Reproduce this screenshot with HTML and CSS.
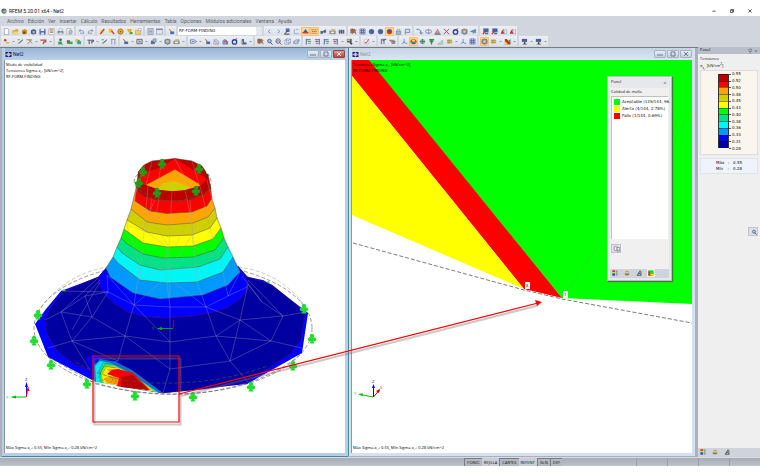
FILE: index.html
```html
<!DOCTYPE html>
<html lang="es">
<head>
    <meta charset="UTF-8">
    <meta name="viewport" content="width=device-width, initial-scale=1.0">
    <title>RFEM 5.20.01 x64 - Net2</title>
    <link rel="stylesheet" href="styles.css">
</head>
<body>
    <header class="titlebar">
        <svg class="app-icon" viewBox="0 0 16 16"><circle cx="8" cy="8" r="7" fill="#4d78a8"/><path d="M3 3l10 3-4 8z" fill="#23476f"/><path d="M6 6h7v6H6z" fill="#d9b64a"/></svg>
        <span class="app-name">RFEM 5.20.01 x64 - Net2</span>
        <button class="sys" aria-label="Minimizar"><svg viewBox="0 0 10 10"><path d="M1 5.5h8"/></svg></button>
        <button class="sys" aria-label="Restaurar"><svg viewBox="0 0 10 10"><path d="M1 3h6v6H1zM3 3V1h6v6H7"/></svg></button>
        <button class="sys" aria-label="Cerrar"><svg viewBox="0 0 10 10"><path d="M1 1l8 8M9 1L1 9"/></svg></button>
    </header>
    <nav class="menubar">
        <a href="#">Archivo</a>
        <a href="#">Edición</a>
        <a href="#">Ver</a>
        <a href="#">Insertar</a>
        <a href="#">Cálculo</a>
        <a href="#">Resultados</a>
        <a href="#">Herramientas</a>
        <a href="#">Tabla</a>
        <a href="#">Opciones</a>
        <a href="#">Módulos adicionales</a>
        <a href="#">Ventana</a>
        <a href="#">Ayuda</a>
    </nav>
    <div class="toolbar">
        <div class="group" data-icons="new open box boxblue save table print preview"></div>
        <div class="group" data-icons="undo redo"></div>
        <div class="group" data-icons="pen find gear cup folder"></div>
        <div class="group" data-icons="sheet window"></div>
        <div class="group" data-icons="load"></div>
        <select class="case" aria-label="Caso de carga"><option>RF-FORM-FINDING</option></select>
        <div class="group" data-icons="prev next node line *result *values glasses cam beam"></div>
        <div class="group" data-icons="mesh grid sphere sphere *redball lock flag"></div>
        <div class="group" data-icons="curve rotate support cross bluering module share"></div>
        <div class="group" data-icons="screen screen arrowred arrowred"></div>
    </div>
    <div class="toolbar">
        <div class="group" data-icons="member - pencil truss - hook -"></div>
        <div class="group" data-icons="man greens cube"></div>
        <div class="group" data-icons="bridge - pencil column"></div>
        <div class="group" data-icons="load - frame - solid - module cam -"></div>
        <div class="group" data-icons="tag - load house houser bluering boot -"></div>
        <div class="group" data-icons="mesh zoom zoomr wire view"></div>
        <div class="group" data-icons="axis axisr axis axisr - fly -"></div>
        <div class="group" data-icons="check -"></div>
        <div class="group" data-icons="portal slab"></div>
        <div class="group" data-icons="axis2 *rainbow greenball tree ramp yellows - axis2 grid"></div>
        <div class="group" data-icons="*module yellows - iso -"></div>
        <div class="group" data-icons="plug - plug -"></div>
    </div>

    <main class="workspace">
        <div class="mdi">
            <section class="window active">
                <div class="window-title">
                    <svg class="doc-icon" viewBox="0 0 12 10"><path d="M0 0h12v10H0z" fill="#1b2070"/><path d="M6 0v10M0 5h12M3 3h6v4H3z" stroke="#fff" fill="none"/></svg>
                    <h2>Net2</h2>
                    <button class="win" aria-label="Minimizar"><svg viewBox="0 0 10 6"><path d="M2 4h6"/></svg></button>
                    <button class="win" aria-label="Maximizar"><svg viewBox="0 0 10 6"><path d="M3 1h4v4H3z"/></svg></button>
                    <button class="win close" aria-label="Cerrar"><svg viewBox="0 0 10 6"><path d="M3 1l4 4M7 1L3 5"/></svg></button>
                </div>
                <div class="view">
                    <svg class="scene" viewBox="5 60 340 393" preserveAspectRatio="xMinYMin meet">
                        <defs>
                            <path id="club" d="M-1 -1.2A2.1 2.1 0 1 1 1 -1.2A2 2 0 1 1 1.2 2L2.6 4.5H-2.6L-1.2 2A2 2 0 1 1-1-1.2z"/>
                        </defs>
                        <!-- undeformed outline -->
                        <g class="outline">
                            <path class="faint" d="M41 308C55 288 78 272 107 267M238 267Q280 272 305 306"/>
                            <ellipse cx="173" cy="328" rx="139" ry="66"/>
                        </g>
                        <!-- base membrane -->
                        <path fill="#0000ff" d="M106 268L98 277 61 291 46 309 35 324 48 357 92 380 163 393 247 384 302 353 308 313 272 285 263 280 248 277 238 266z"/>
                        <path class="edge" fill="#0000a0" d="M98 277L63 292 50 308 45 320 47 334 57 351 74 364 92 371 118 386 163 393 205 389 247 382 270 367 290 354 301 340 305 312 272 285 248 277z"/>
                        <path fill="#0000ff" d="M86 358l7-3 30 8-28 19z"/>
                        <path class="edge" fill="#0000ff" d="M106 268L98 278 100 287 106 296 115 304 128 312 147 317 167 318 193 316 210 313 227 308 240 299 248 289 248 281 238 266z"/>
                        <!-- stress bands of the cone, bottom to top -->
                        <g class="bands">
                            <path fill="#0099ff" d="M113 257L106 268 110 277 133 293 160 299 203 295 228 285 240 272 233 257z"/>
                            <path fill="#00f5f5" d="M117 247L113 257 118 263 140 280 167 283 197 282 223 272 233 257 228 247z"/>
                            <path fill="#00e285" d="M121 238L117 247 122 253 140 265 160 270 198 267 220 259 228 247 224 238z"/>
                            <path fill="#00ff00" d="M124 229L121 238 126 243 143 254 163 258 193 257 215 250 224 238 221 228z"/>
                            <path fill="#ffff00" d="M127 220L124 229 143 243 167 247 193 246 213 239 221 228 217 218z"/>
                            <path fill="#d0d000" d="M131 209L127 220 147 232 167 236 192 235 210 228 217 218 215 208z"/>
                            <path fill="#ffa500" d="M137 184L131 209 147 222 167 225 193 223 208 217 215 208 212 199z"/>
                            <path fill="#ff0000" d="M138 175L135 201 150 211 167 213.500 192 212 207 206 212 198 210 184z"/>
                            <path fill="#bb0000" d="M138 174L138 192 145 197 155 200 175 201 190 200 203 195 211 189 208 174z"/>
                        </g>
                        <!-- inside of the ring -->
                        <path fill="#bb0000" stroke="#333" stroke-width=".5" d="M139 181L138 172 144 165 152 161 162 160 175 158.500 192 161 202 166 206 172 207 180 200 186 185 190 172 191 160 190 148 187z"/>
                        <path fill="#ff0000" d="M139 181L140 174 160 168 175 158.500 206 178 207 180 200 186 148 187z"/>
                        <path fill="#ffa500" d="M146 185L175 169.500 199 184 200 186 185 190 172 191 160 190z"/>
                        <path fill="#d0d000" d="M157 189L164 183 175 181.500 190 187 185 190 172 191z"/>
                        <path class="outline" d="M138 174C130 182 134 190 155 199Q178 204 203 195Q216 185 208 174"/>
                        <!-- mesh -->
                        <path class="mesh" d="M108 292L85 296 61 312 45 320M108 292L62 291M85 296L92 317 61 312 72 341 48 348M92 317L72 341 125 336 92 317 108 292 134 305 125 336 170 342 134 305 170 307 170 342 216 336 206 307 170 307M72 341L90 370M72 341L118 361 125 336 170 369 170 342M170 369L230 361 216 336 240 320 206 307 228 296 247 287M240 320L271 341 216 336M240 320L230 361 248 382M240 320L283 316 271 341 302 348M271 341L230 361M283 316L305 312M283 316L248 280M240 320L248 284 262 302 283 316M262 302L242 276M170 369L163 393M118 361L95 366M134 305L107 275M134 305L167 277 206 307M107 275L108 292M228 296L240 272M85 296L100 280M72 330L100 282M61 312L98 278"/>
                        <path class="mesh" d="M139 181L127 225 140 265 134 305M148 187L143 243 140 280M152 198L147 232 167 247 167 283 170 307M160 190L155 225 169 247 170 299M172 191L169 247M185 190L192 223 197 282 206 307M190 200L193 246 220 259 228 296M200 186L213 239 228 247M207 180L217 218 240 272M127 225L147 232M127 215L150 211 155 200M124 229L143 255 160 270 140 280M169 247L160 270 197 267M145 165L139 181M152 161L146 185M162 160L157 189M175 159L190 187M192 161L199 184M192 235L169 270M192 212L175 247"/>
                        <!-- stress concentration at the edge -->
                        <path fill="#176fc8" d="M94 365L100 359 116 362 132 370 163 393 145 390 94 381z"/>
                        <path fill="#00eaf5" d="M95 366L100 361 110 363 126 371 158 392 96 382z"/>
                        <path fill="#00dd88" d="M99 370L106 362 130 374 155 391 99 382z"/>
                        <path fill="#a7d818" d="M101 372L105 365 115 366 134 376 156 392 102 382z"/>
                        <path fill="#ffee00" d="M102 376L107 367 121 369 139 382 153 391 104 383z"/>
                        <path fill="#ff9d00" d="M104 379L113 376 107 369 119 369 150 390 107 383z"/>
                        <path fill="#f80000" d="M107 374L112 370 118 369 133 373 150 390 117 386 119 378z"/>
                        <path fill="#b80000" d="M121 387L122 377 132 375 149 390z"/>
                        <path class="contour" d="M98 378L104 366 116 368M102 381L109 376M110 383Q117 378 108 376M114 384Q119 380 113 377M97 374L103 363 119 365 137 377"/>
                        <path class="outline" d="M48 357L96 384Q163 401 218 390Q270 381 302 353M76 362Q112 384 163 383Q217 384 268 366"/>
                        <g fill="#23dc32">
                            <use href="#club" x="38" y="315"/><use href="#club" x="34" y="341"/><use href="#club" x="51" y="365"/>
                            <use href="#club" x="87" y="384"/><use href="#club" x="135" y="396"/><use href="#club" x="193" y="397"/>
                            <use href="#club" x="251" y="387"/><use href="#club" x="293" y="366"/><use href="#club" x="312" y="339"/>
                            <use href="#club" x="304" y="309"/>
                            <path d="M61 291l3-2 2 2zM266 282l3-1 1 3z"/>
                        </g>
                        <g fill="#259a17">
                            <use href="#club" x="162" y="164"/><use href="#club" x="143" y="172"/><use href="#club" x="139" y="183"/>
                            <use href="#club" x="157" y="193"/><use href="#club" x="196" y="191"/><use href="#club" x="199" y="169"/>
                        </g>
                        <g class="axes">
                            <path stroke="#00a000" d="M173 328.500H158"/><path fill="#00c000" d="M157 328.500l5-1.500v3z"/><path stroke="#c00000" d="M173 328.500l1-9"/>
                            <text x="152" y="330" fill="#00a000">Y</text>
                            <path stroke="#00c000" d="M26 397H12"/><path fill="#00c000" d="M11 397l5-1.500v3z"/>
                            <path stroke="#0000ff" d="M26.500 397V384"/><path fill="#0000ff" d="M26.500 382l-1.500 5h3z"/>
                            <path stroke="#ff0000" d="M26.500 397l1-8"/><path fill="#ff0000" d="M28 386l-1.500 5h3z"/>
                            <text x="6" y="399" fill="#00dd00">Y</text>
                            <text x="25" y="381" fill="#0000ff">Z</text>
                        </g>
                    </svg>
                    <div class="caption top">
                        <p>Modo de visibilidad</p>
                        <p>Tensiones Sigma-x,- [kN/cm^2]</p>
                        <p>RF-FORM-FINDING</p>
                    </div>
                    <p class="caption bottom">Máx Sigma-x,-: 0.55, Mín Sigma-x,-: 0.28 kN/cm^2</p>
                </div>
            </section>

            <section class="window">
                <div class="window-title">
                    <svg class="doc-icon" viewBox="0 0 12 10"><path d="M0 0h12v10H0z" fill="#1b2070"/><path d="M6 0v10M0 5h12M3 3h6v4H3z" stroke="#fff" fill="none"/></svg>
                    <h2>Net2</h2>
                    <button class="win" aria-label="Minimizar"><svg viewBox="0 0 10 6"><path d="M2 4h6"/></svg></button>
                    <button class="win" aria-label="Maximizar"><svg viewBox="0 0 10 6"><path d="M3 1h4v4H3z"/></svg></button>
                    <button class="win" aria-label="Cerrar"><svg viewBox="0 0 10 6"><path d="M3 1l4 4M7 1L3 5"/></svg></button>
                </div>
                <div class="view">
                    <svg class="scene" viewBox="352 60 340 393" preserveAspectRatio="xMinYMin meet">
                        <path fill="#00ff00" d="M368 60H692V304L562 298z"/>
                        <path fill="#ff0000" d="M352 60H369L562 298 524 289 352 76z"/>
                        <path fill="#ffff00" d="M352 76L524 289 352 215z"/>
                        <path stroke="#30d030" stroke-width=".5" d="M562 298L692 113"/>
                        <path class="outline dark" d="M353 243L524 290 562 299 692 323"/>
                        <g class="node">
                            <rect x="525" y="282" width="5" height="7"/><text x="526" y="287">8</text>
                            <rect x="563" y="291" width="5" height="7"/><text x="564" y="296">7</text>
                        </g>
                        <g class="axes">
                            <path stroke="#00c000" d="M373.500 397L360 394.500"/><path fill="#00c000" d="M358 394l5-.700-.500 3z"/>
                            <path stroke="#0000ff" d="M373.500 397V386"/><path fill="#0000ff" d="M373.500 384l-1.500 4h3z"/>
                            <path stroke="#c00000" d="M373.500 397l5-6"/><path fill="#c00000" d="M380 389l-4 2 3 2z"/>
                            <text x="354" y="395" fill="#00dd00">Y</text>
                            <text x="372" y="383" fill="#0000ff">Z</text>
                            <text x="380" y="389" fill="#ff0000">X</text>
                        </g>
                    </svg>
                    <div class="caption top">
                        <p>Tensiones Sigma-x,- [kN/cm^2]</p>
                        <p>RF-FORM-FINDING</p>
                    </div>
                    <p class="caption bottom">Máx Sigma-x,-: 0.55, Mín Sigma-x,-: 0.28 kN/cm^2</p>

                    <aside class="float-panel">
                        <div class="float-title"><h3>Panel</h3><button class="x" aria-label="Cerrar">×</button></div>
                        <div class="float-body">
                            <h4>Calidad de malla</h4>
                            <ul class="quality">
                                <li><i class="ok"></i><span>Aceptable (139/144, 96.</span></li>
                                <li><i class="warn"></i><span>Alerta (4/144, 2.78%)</span></li>
                                <li><i class="bad"></i><span>Fallo (1/144, 0.69%)</span></li>
                            </ul>
                            <button class="tool" data-icon="copy" aria-label="Copiar"></button>
                        </div>
                        <div class="tabs">
                            <button data-icon="colors" aria-label="Colores"></button>
                            <button data-icon="scale" aria-label="Factores"></button>
                            <button data-icon="micro" aria-label="Filtro"></button>
                            <button data-icon="quality" class="on" aria-label="Calidad"></button>
                        </div>
                    </aside>
                </div>
            </section>

            <svg class="notes" viewBox="0 47 698 410" preserveAspectRatio="xMinYMin meet">
                <g class="shadow"><path d="M94.500 358.500h86v66h-86zM181 396L538 305.500"/></g>
                <path class="mark" d="M93 356h86v66H93zM179 394L538 303"/>
                <path class="head" d="M542 302l-7-2 2 6z"/>
            </svg>
        </div>

        <aside class="side">
            <div class="side-title"><h3>Panel</h3><button class="x" aria-label="Fijar">⚲</button><button class="x" aria-label="Cerrar">×</button></div>
            <div class="side-body">
                <p>Tensiones</p>
                <p>σ<sub>x,-</sub> [kN/cm<sup>2</sup>]</p>
                <div class="legend">
                    <div class="bar" id="bar"></div>
                    <ol class="labels">
                        <li>0.55</li><li>0.52</li><li>0.50</li><li>0.48</li><li>0.45</li><li>0.43</li>
                        <li>0.40</li><li>0.38</li><li>0.36</li><li>0.33</li><li>0.31</li><li>0.28</li>
                    </ol>
                </div>
                <div class="limits">
                    <p><span>Máx</span><span>:</span><span>0.55</span></p>
                    <p><span>Mín</span><span>:</span><span>0.28</span></p>
                </div>
                <button class="tool right" data-icon="zoom" aria-label="Detalles"></button>
            </div>
            <div class="tabs">
                <button data-icon="colors" aria-label="Colores"></button>
                <button data-icon="scale" aria-label="Factores"></button>
                <button data-icon="micro" aria-label="Filtro"></button>
            </div>
        </aside>
    </main>

    <footer class="statusbar">
        <div class="modes">
            <button class="on">FORZC</button>
            <button>REJILLA</button>
            <button class="on">CARTES</button>
            <button>REFENT</button>
            <button class="on">GLN</button>
            <button class="on">DXF</button>
        </div>
        <div class="cells"><span></span><span></span><span></span><span></span></div>
    </footer>

    <script src="script.js"></script>
</body>
</html>
```

FILE: styles.css
```css
* {
    box-sizing: border-box;
}
body {
    margin: 0;
    height: 100vh;
    padding-bottom: 7px;
    display: flex;
    flex-direction: column;
    background: #fff;
    color: #111;
    font-family: "Open Sans", "Noto Sans", sans-serif;
    font-size: 4px;
    line-height: 6px;
}
p, h2, h3, h4, ul, ol {
    margin: 0;
    padding: 0;
    font-size: 4px;
    font-weight: normal;
    list-style: none;
}
button {
    margin: 0;
    padding: 0;
    border: none;
    background: none;
    color: inherit;
    font: inherit;
}
svg {
    display: block;
}
.titlebar {
    display: flex;
    align-items: center;
    height: 16px;
    padding: 6px 1px 0;
}
.app-icon {
    width: 6px;
    height: 6px;
    margin-right: 2px;
}
.app-name {
    flex: 1;
    font-family: Roboto, sans-serif;
    font-size: 5px;
}
.sys {
    width: 18px;
}
.sys svg {
    width: 4px;
    height: 4px;
    margin: 0 auto;
    fill: none;
    stroke: #333;
    stroke-width: 2;
}
.menubar {
    display: flex;
    gap: 4px;
    height: 10px;
    padding: 2px 7px;
    background: #d0d5de;
    font-family: Roboto, sans-serif;
    font-size: 5px;
}
.menubar a {
    color: #5c6068;
    text-decoration: none;
}

/* toolbars */
.toolbar {
    display: flex;
    gap: 2px;
    height: 10px;
    padding-left: 1px;
    background: #d0d5de;
}
.group {
    display: flex;
    align-items: center;
    padding-left: 1px;
    background: linear-gradient(#eceff4, #dbe0e9);
}
.group button {
    width: 9px;
    height: 9px;
    padding: 1px;
}
.group .hot {
    background: #ffd694;
    box-shadow: inset 0 0 0 1px #f2c27a;
}
.group .more {
    width: 5px;
    padding: 4px 1px;
}
.more::before {
    content: "";
    display: block;
    border: 1px solid transparent;
    border-top-color: #9095a0;
}
.case {
    width: 84px;
    height: 8px;
    margin-top: 1px;
    padding: 0 1px;
    border: none;
    border-right: 6px solid #e3e7ee;
    appearance: none;
    background: #fff;
    color: #222;
    font: 4px/8px "DejaVu Sans", sans-serif;
}

/* document windows */
.workspace {
    display: flex;
    flex: 1;
    min-height: 0;
    border-top: 1px solid #d0d5de;
    background: #c9d0da;
}
.mdi {
    position: relative;
    display: flex;
    flex: 1;
    gap: 1px;
    min-width: 0;
    padding: 1px 3px 1px 2px;
    background: linear-gradient(#777b82 1px, #aab1bc 1px);
}
.window {
    display: flex;
    flex: 1;
    flex-direction: column;
    min-width: 0;
    padding: 0 3px 3px;
    background: #d5e1ee;
}
.window.active {
    background: #b5cfe9;
    box-shadow: 1px 0 #4d8796, 0 1px #4d8796;
}
.window-title {
    display: flex;
    align-items: center;
    gap: 1px;
    flex: none;
    height: 12px;
    background: linear-gradient(#c5d4e3, #dae6f2);
    color: #8f98a3;
}
.active .window-title {
    background: linear-gradient(#98b5d4, #b9d1ea);
    color: #222;
}
.doc-icon {
    width: 7px;
    height: 5px;
}
.window-title h2 {
    flex: 1;
    font-family: Roboto, sans-serif;
    font-size: 5px;
}
.win {
    width: 12px;
    height: 8px;
    border: 1px solid #a5b4c5;
    border-radius: 1px;
    background: linear-gradient(#e6edf5, #c0d0e0);
}
.win svg {
    width: 10px;
    height: 6px;
    fill: none;
    stroke: #717a85;
}
.win.close {
    border-color: #8b4a4a;
    background: linear-gradient(#e39a8c, #c43f2d);
}
.win.close svg {
    stroke: #fff;
}
.view {
    position: relative;
    flex: 1;
    min-height: 0;
    background: #fff;
    box-shadow: -1px 0 #8e959c;
}
.scene {
    width: 100%;
    height: 100%;
}
.caption {
    position: absolute;
    left: 1px;
    color: #000;
}
.caption.top {
    top: 2px;
}
.caption.bottom {
    bottom: 2px;
}

/* model drawing */
.outline {
    fill: none;
    stroke: #555;
    stroke-width: .6;
    stroke-dasharray: 4 2;
}
.outline.dark {
    stroke: #222;
}
.faint {
    stroke: #aaa;
}
.edge {
    stroke: #7a0050;
    stroke-width: .4;
}
.bands path {
    stroke: #553;
    stroke-width: .5;
}
.mesh {
    fill: none;
    stroke: #a8a8b0;
    stroke-width: .5;
    opacity: .65;
}
.contour {
    fill: none;
    stroke: #553;
    stroke-width: .4;
}
.axes text {
    font-size: 4px;
}
.node rect {
    fill: #fff;
}
.node text {
    font-size: 4px;
    fill: #000;
}
.notes {
    position: absolute;
    left: 0;
    top: 0;
    width: 100%;
    height: 100%;
    pointer-events: none;
}
.mark {
    fill: none;
    stroke: #ff0000;
    stroke-width: 1.2;
}
.head {
    fill: #ff0000;
}
.shadow path {
    fill: none;
    stroke: #777;
    stroke-width: 2;
    opacity: .4;
}

/* floating panel */
.float-panel {
    position: absolute;
    top: 16px;
    right: 20px;
    width: 65px;
    height: 205px;
    display: flex;
    flex-direction: column;
    padding: 0 2px 2px;
    border: 1px solid #b9bdc4;
    background: #e6e8ec;
    box-shadow: 1px 1px 1px #3a7a3a;
}
.float-title {
    display: flex;
    justify-content: space-between;
    height: 11px;
    padding: 2px 1px;
}
.x {
    width: 6px;
    line-height: 6px;
    font-size: 6px;
    color: #666;
}
.float-body {
    flex: 1;
    padding: 1px 1px 0;
    background: #f0f0f0;
}
.quality {
    height: 143px;
    margin: 1px 0 5px;
    padding: 1px 0 0 2px;
    border: 1px solid #c0c0c0;
    border-width: 1px 0 0 1px;
    background: #fff;
    font-family: "DejaVu Sans", sans-serif;
}
.quality li {
    display: flex;
    align-items: center;
    gap: 2px;
    height: 7px;
    white-space: nowrap;
}
.quality i {
    flex: none;
    width: 6px;
    height: 6px;
}
.ok {
    background: #00ff00;
}
.warn {
    background: #ffff00;
}
.bad {
    background: #ff0000;
}
.tool {
    display: block;
    width: 10px;
    height: 9px;
    padding: 1px;
    border: 1px solid #c4c4c8;
    background: #dfe0e3;
}
.tool svg {
    width: 8px;
    height: 6px;
}
.tool.right {
    margin: 53px 0 0 auto;
}
.tabs {
    display: flex;
    gap: 4px;
    flex: none;
    height: 9px;
    padding: 0 1px;
    background: #ced3dc;
}
.tabs button {
    width: 8px;
    height: 8px;
    padding: 1px;
}
.tabs .on {
    background: #f0f0f0;
}

/* result panel */
.side {
    display: flex;
    flex-direction: column;
    flex: none;
    width: 62px;
}
.side-title {
    display: flex;
    height: 7px;
    padding: 0 1px 0 2px;
    background: #b8bfca;
}
.side-title h3 {
    flex: 1;
}
.side-body {
    flex: 1;
    padding: 2px 2px 0;
    background: #efefef;
}
.side-body > p {
    height: 7px;
}
sub, sup {
    font-size: 3px;
    line-height: 1px;
}
.legend {
    display: flex;
    height: 85px;
    padding: 0 0 0 17px;
    border: 1px solid #dcdcdc;
    background: #faf5ed;
    font-family: "DejaVu Sans", sans-serif;
}
.bar {
    display: flex;
    flex-direction: column;
    width: 11px;
    height: 74px;
    margin-top: 3px;
    border: 1px solid #333;
    border-width: 0 1px;
}
.bar i {
    flex: 1;
    border-top: 1px solid rgba(0, 0, 0, .4);
}
.labels {
    display: flex;
    flex-direction: column;
    height: 81px;
}
.labels li {
    display: flex;
    flex: 1;
    align-items: center;
    gap: 1px;
    line-height: 6px;
}
.labels li::before {
    content: "";
    width: 2px;
    height: 1px;
    background: #555;
}
.limits {
    margin-top: 3px;
    padding: 1px 15px;
    border: 1px solid #dfe4ee;
    background: #eff3fb;
    font-family: "DejaVu Sans", sans-serif;
}
.limits p {
    display: flex;
    justify-content: space-between;
}

/* status bar */
.statusbar {
    display: flex;
    justify-content: flex-end;
    flex: none;
    height: 9px;
    border-top: 1px solid #d8dce2;
    background: linear-gradient(#a6adb6, #bcc2ca);
}
.modes {
    display: flex;
    margin-right: 74px;
}
.modes button {
    padding: 0 2px;
    background: #c9cdd4;
    line-height: 7px;
}
.modes .on {
    border: 1px solid #777d86;
    border-width: 1px 0 0 1px;
    background: #b3b8c0;
    line-height: 6px;
}
.cells {
    display: flex;
}
.cells span {
    width: 31px;
    border-left: 1px solid #989fa9;
}
```

FILE: script.js
```js
const ICONS = {
    new: '<path d="M3 1h7l3 3v11H3z" fill="#fff" stroke="#666"/>',
    open: '<path d="M1 5h6l1-2h6v11H1z" fill="#d9a13a"/><path d="M4 8h12l-3 6H1z" fill="#f6d67c"/>',
    box: '<path d="M2 5l7-3 5 3v8l-7 2-5-2z" fill="#c99526"/><path d="M5 8h5v5H5z" fill="#5a4a20"/>',
    boxblue: '<path d="M2 5l7-3 5 3v8l-7 2-5-2z" fill="#3f66b5"/><path d="M6 7h5v5H6z" fill="#e0b040"/>',
    save: '<path d="M1 2h14v13H1z" fill="#5a69b8"/><path d="M4 2h8v5H4zM5 10h6v5H5z" fill="#eef"/>',
    table: '<path d="M2 1h12v14H2z" fill="#fff" stroke="#777"/><path d="M4 4h8M4 7h8M4 10h8" stroke="#a87843" stroke-width="2"/>',
    print: '<path d="M1 7h14v6H1z" fill="#8590a3"/><path d="M4 2h8v5H4zM4 10h8v4H4z" fill="#fff" stroke="#789"/>',
    preview: '<path d="M2 1h9v13H2z" fill="#fff" stroke="#777"/><circle cx="10" cy="9" r="4" fill="#b6cce4" stroke="#567"/>',
    undo: '<path d="M3 6h7q4 1 3 6H5M6 3L2 6l4 3" fill="none" stroke="#8794b0" stroke-width="2"/>',
    redo: '<path d="M13 6H6q-4 1-3 6h8M10 3l4 3-4 3" fill="none" stroke="#8794b0" stroke-width="2"/>',
    pen: '<path d="M2 4h12l-4 9H1z" fill="#e9dc72"/><path d="M3 14L12 2" stroke="#b33d2c" stroke-width="3"/>',
    find: '<circle cx="6" cy="6" r="5" fill="#f1c232"/><path d="M8 6l6 8" stroke="#c0392b" stroke-width="3"/>',
    gear: '<circle cx="8" cy="8" r="6" fill="#eab82d" stroke="#9b6a1d" stroke-width="2"/><circle cx="8" cy="8" r="2" fill="#b33"/>',
    cup: '<path d="M2 2h12l-3 7H5zM7 9h2v5H7z" fill="#e3b51c"/><path d="M9 9h6v5H9z" fill="#55a030"/>',
    folder: '<path d="M1 5h12v10H1z" fill="#f0ce62" stroke="#ae8a32"/><path d="M8 1h6v5H8z" fill="#fff" stroke="#789"/>',
    sheet: '<path d="M2 1h12v14H2z" fill="#cdd7e8" stroke="#667"/><path d="M4 5h8M4 8h8M4 11h8" stroke="#667"/>',
    window: '<path d="M1 2h14v12H1z" fill="#dbe7f5" stroke="#778"/><path d="M1 3h14" stroke="#668" stroke-width="2"/>',
    load: '<path d="M2 2l6 3-2 4z" fill="#ddb030"/><path d="M5 8h9v6H5z" fill="#4971b8"/><path d="M2 2l9 9" stroke="#a33"/>',
    prev: '<path d="M10 4L5 8l5 4" fill="none" stroke="#6d8fc4" stroke-width="2"/>',
    next: '<path d="M6 4l5 4-5 4" fill="none" stroke="#6d8fc4" stroke-width="2"/>',
    node: '<path d="M4 1h9v8H4z" fill="#5673a8"/><path d="M1 14l8-8M1 14h12" stroke="#233" stroke-width="2"/>',
    line: '<path d="M3 3v10h11M6 3h7" fill="none" stroke="#99a7bc" stroke-width="2"/>',
    result: '<path d="M2 11l6-9 6 9z" fill="#2e61ae"/><path d="M1 11h14" stroke="#c33" stroke-width="3"/>',
    values: '<path d="M1 4h14M2 8h12M1 12h13" stroke="#b06825" stroke-width="2" stroke-dasharray="3 1"/>',
    glasses: '<path d="M1 7h6v6H1zM8 5h6v6H8z" fill="#51658c"/><path d="M7 9l7-6" stroke="#234"/>',
    cam: '<path d="M1 6h14v8H1z" fill="#80838c"/><path d="M5 3h9v3H5z" fill="#d4a93a"/><path d="M4 8h8v4H4z" fill="#dde8f4"/>',
    beam: '<path d="M1 5h14v7H1z" fill="#9ba9bb"/><path d="M4 4v9M8 4v9M12 4v9" stroke="#345" stroke-width="2"/>',
    mesh: '<path d="M1 2h10v10H1z" fill="#777"/><path d="M1 5h14M5 1v13M10 3l4 11" stroke="#b35a22" stroke-width="2"/>',
    grid: '<path d="M2 2h12v12H2z" fill="#d9ddf4" stroke="#3d4c92"/><path d="M6 2v12M10 2v12M2 6h12M2 10h12" stroke="#5a67a8" stroke-width="2"/>',
    sphere: '<circle cx="8" cy="8" r="6" fill="#3870b5"/><path d="M8 3l5 8H7z" fill="#9f3b40"/>',
    redball: '<circle cx="8" cy="8" r="6" fill="#c33c20"/><path d="M4 5h7v4H4z" fill="#345ca0"/>',
    lock: '<path d="M3 7h10v8H3z" fill="#a7b4c8" stroke="#567"/><path d="M5 7V3h6v4" fill="none" stroke="#678"/>',
    flag: '<path d="M3 15V3h10v7H4" fill="#dde4ef" stroke="#50618a" stroke-width="1.5"/>',
    curve: '<path d="M1 3h5q6 2 6 10M9 10l3 4 3-4" fill="none" stroke="#567396" stroke-width="2"/>',
    rotate: '<ellipse cx="8" cy="8" rx="7" ry="4" fill="none" stroke="#6286b3" stroke-width="2"/><path d="M8 2v12" stroke="#b34747"/>',
    support: '<path d="M8 3l5 9H3z" fill="#d8a0a0" stroke="#a33"/><path d="M1 14h14" stroke="#345" stroke-width="2"/>',
    cross: '<path d="M2 2l12 12M14 2L2 14" stroke="#c83232" stroke-width="2"/>',
    bluering: '<circle cx="8" cy="9" r="5" fill="#dce4f5" stroke="#2c4290" stroke-width="3"/><path d="M9 4l5-3" stroke="#a33" stroke-width="2"/>',
    module: '<path d="M2 4l6-2 6 2v8l-6 3-6-3z" fill="#8896b3" stroke="#404c68"/><circle cx="8" cy="8" r="3" fill="#e8c865"/>',
    share: '<path d="M1 8l12-5v8zM6 8l3 6" fill="#6b93c8" stroke="#406495"/>',
    screen: '<path d="M3 1h12v9H3z" fill="#3468a8"/><path d="M2 14l7-8" stroke="#c33" stroke-width="3"/><path d="M7 13h7" stroke="#333" stroke-width="2"/>',
    arrowred: '<path d="M2 13h9l-3-4V1L3 9z" fill="#c72d32"/><path d="M11 4h4v9h-4z" fill="#fff" stroke="#778"/>',
    member: '<circle cx="5" cy="5" r="3" fill="#cb403b"/><path d="M6 9h8v4H8z" fill="#e8ba33"/>',
    pencil: '<path d="M1 4h6M2 13L14 3" stroke="#62995a" stroke-width="2"/><path d="M5 12l8-7" stroke="#56677d" stroke-width="2"/>',
    truss: '<path d="M1 4h12L3 14M6 4l8 8" fill="none" stroke="#a57658" stroke-width="2"/>',
    hook: '<path d="M1 5h12v4H9l-2 5" fill="none" stroke="#c34238" stroke-width="3"/>',
    man: '<circle cx="8" cy="4" r="3" fill="#556"/><path d="M3 8h8v5h3v2H3z" fill="#32a155"/>',
    greens: '<path d="M2 5h7v8H2z" fill="#7a6a42"/><path d="M7 8h8v6H7z" fill="#36ad50"/>',
    cube: '<path d="M2 4h7l5 4v6H6z" fill="#39a88f"/><path d="M1 3h6v5H1z" fill="#e2b443"/>',
    bridge: '<path d="M1 5h14v3l-4-1v6M5 6v8" fill="none" stroke="#3a4252" stroke-width="2"/>',
    column: '<path d="M4 3v12M11 3v12M2 3h11" stroke="#88909c" stroke-width="2"/>',
    frame: '<path d="M2 3h12v10H2z" fill="#dde" stroke="#566" stroke-width="2"/><path d="M5 6h6v4H5z" fill="#889"/>',
    solid: '<path d="M2 6h9v8H2z" fill="#5d7294"/><path d="M7 2h7v7H7z" fill="#aebfdb" stroke="#456"/>',
    tag: '<path d="M1 4h8l6 4-6 4H1zM4 8h6" fill="#dde6f2" stroke="#435f91" stroke-width="1.5"/>',
    house: '<path d="M2 14V6l5-3 6 5v6z" fill="#c9d5e8" stroke="#607596"/><path d="M1 3l11 11" stroke="#a66"/>',
    houser: '<path d="M2 14V6l5-3 6 5v6z" fill="#79aad4" stroke="#406080"/><path d="M4 7h7v7" stroke="#d33" fill="none" stroke-width="2"/>',
    boot: '<path d="M4 2h5v7l6 2v4H4z" fill="#4864a4"/><path d="M2 8h5v4H2z" fill="#e2ac35"/>',
    zoom: '<path d="M2 2h9v11H2z" fill="#d8deea"/><circle cx="8" cy="7" r="4" fill="#aac4e6" stroke="#405f98" stroke-width="2"/><path d="M10 10l5 5" stroke="#345" stroke-width="2"/>',
    zoomr: '<circle cx="7" cy="7" r="5" fill="#d8e4f4" stroke="#405f98" stroke-width="2"/><path d="M10 10l5 5M4 7h6" stroke="#b43" stroke-width="2"/>',
    wire: '<path d="M2 5h9v9H2zM2 5l4-3h9v9l-4 3M11 5l4-3M6 2v9h9" fill="#edf3fd" stroke="#5774aa"/>',
    view: '<path d="M1 8l6-4h8l-4 9H2z" fill="#a5b9d8" stroke="#506b98"/><path d="M7 4v9" stroke="#fff"/>',
    axis: '<path d="M3 2v13M3 4h10" stroke="#3d59b0" stroke-width="2"/><path d="M6 8h8M7 12h6" stroke="#37a84c" stroke-width="2"/>',
    axisr: '<path d="M12 2v13M2 4h10" stroke="#3d59b0" stroke-width="2"/><path d="M3 8h7M4 12h6" stroke="#c44444" stroke-width="2"/>',
    fly: '<path d="M2 2h11v8H2z" fill="#555c68"/><path d="M3 3h6v4H3z" fill="#d3c86e"/><path d="M9 10l5 4" stroke="#333" stroke-width="3"/>',
    check: '<path d="M3 3h10v11H3z" fill="#eee" stroke="#aab"/><path d="M4 9l3 3 6-9" fill="none" stroke="#b6433c" stroke-width="2"/>',
    portal: '<path d="M3 14V3h11M9 3v11M5 7l9-4" fill="none" stroke="#58606b" stroke-width="2"/>',
    slab: '<path d="M1 5h10l4 4H6z" fill="#b68b69" stroke="#556"/><path d="M6 10h8v3H6z" fill="#666"/>',
    axis2: '<path d="M7 2v9M2 13l5-3 7 3" fill="none" stroke="#6587c1" stroke-width="2"/>',
    rainbow: '<ellipse cx="8" cy="8" rx="7" ry="5" fill="#e43922"/><path d="M1 8h14v3H1z" fill="#35c43e"/><path d="M4 11h8v3H4z" fill="#2a5cd2"/><ellipse cx="8" cy="6" rx="4" ry="2" fill="#ffe12e"/>',
    greenball: '<circle cx="8" cy="8" r="6" fill="#77c38a"/><path d="M2 8h12M8 2v12" stroke="#407f79" stroke-width="2"/>',
    tree: '<path d="M8 2v13M3 4h11M4 8h8" stroke="#27924c" stroke-width="3"/>',
    ramp: '<path d="M2 14l11-9v9z" fill="#c0d7d6" stroke="#70918e"/>',
    yellows: '<path d="M2 3h12v10H2z" fill="#e2ce6d"/><path d="M2 6h12M2 10h12M7 3v10" stroke="#76663c"/>',
    iso: '<path d="M2 2h4l9 9v4H2z" fill="#cf2929"/><path d="M2 7l8 8H2z" fill="#f0d92e"/><path d="M8 8l7-6v9z" fill="#37a946"/>',
    plug: '<path d="M2 2h12v7H2z" fill="#4a5f9e"/><path d="M7 9h3v5H7zM4 13h9v2H4z" fill="#444"/>',
    copy: '<path d="M1 2h7v10H1zM8 4h7v10H8z" fill="#fff" stroke="#667" stroke-width="1.500"/><path d="M10 9h3v3h-3z" fill="#778"/>',
    colors: '<path d="M1 1h7v4H1z" fill="#e00"/><path d="M1 5h7v3H1z" fill="#ed0"/><path d="M1 8h7v3H1z" fill="#0b4"/><path d="M1 11h7v4H1z" fill="#23c"/><path d="M10 3h5M10 8h5M10 13h5" stroke="#555" stroke-width="2"/>',
    scale: '<path d="M2 6q6-8 12 0z" fill="#c99a2d"/><path d="M1 9h14l-3 5H4z" fill="#8a7442"/>',
    micro: '<path d="M4 13l7-11 2 2v10M2 14h12M6 9h5" fill="none" stroke="#333" stroke-width="2"/>',
    quality: '<path d="M1 1h14v14H1z" fill="#00e020"/><path d="M1 1l10 14H1z" fill="#f02020"/><path d="M6 10h9v5H6z" fill="#ffe000"/>'
};

const STRESS_COLORS = ['#bb0000', '#ff0000', '#ffa500', '#d0d000', '#ffff00', '#00ff00',
    '#00e285', '#00f5f5', '#0099ff', '#0000ff', '#0000a0'];

function iconSvg(name) {
    return `<svg viewBox="0 0 16 16">${ICONS[name]}</svg>`;
}

// "*" marks a pressed button, "-" a drop-down arrow
document.querySelectorAll('.group').forEach(group => {
    group.innerHTML = group.dataset.icons.split(' ').map(item => {
        if (item === '-') return '<button class="more" aria-label="Más"></button>';
        const name = item.replace('*', '');
        const hot = item.startsWith('*') ? ' class="hot"' : '';
        return `<button${hot} aria-label="${name}">${iconSvg(name)}</button>`;
    }).join('');
});

document.querySelectorAll('[data-icon]').forEach(button => {
    button.innerHTML = iconSvg(button.dataset.icon);
});

document.getElementById('bar').innerHTML = STRESS_COLORS
    .map(color => `<i style="background: ${color}"></i>`).join('');
```
